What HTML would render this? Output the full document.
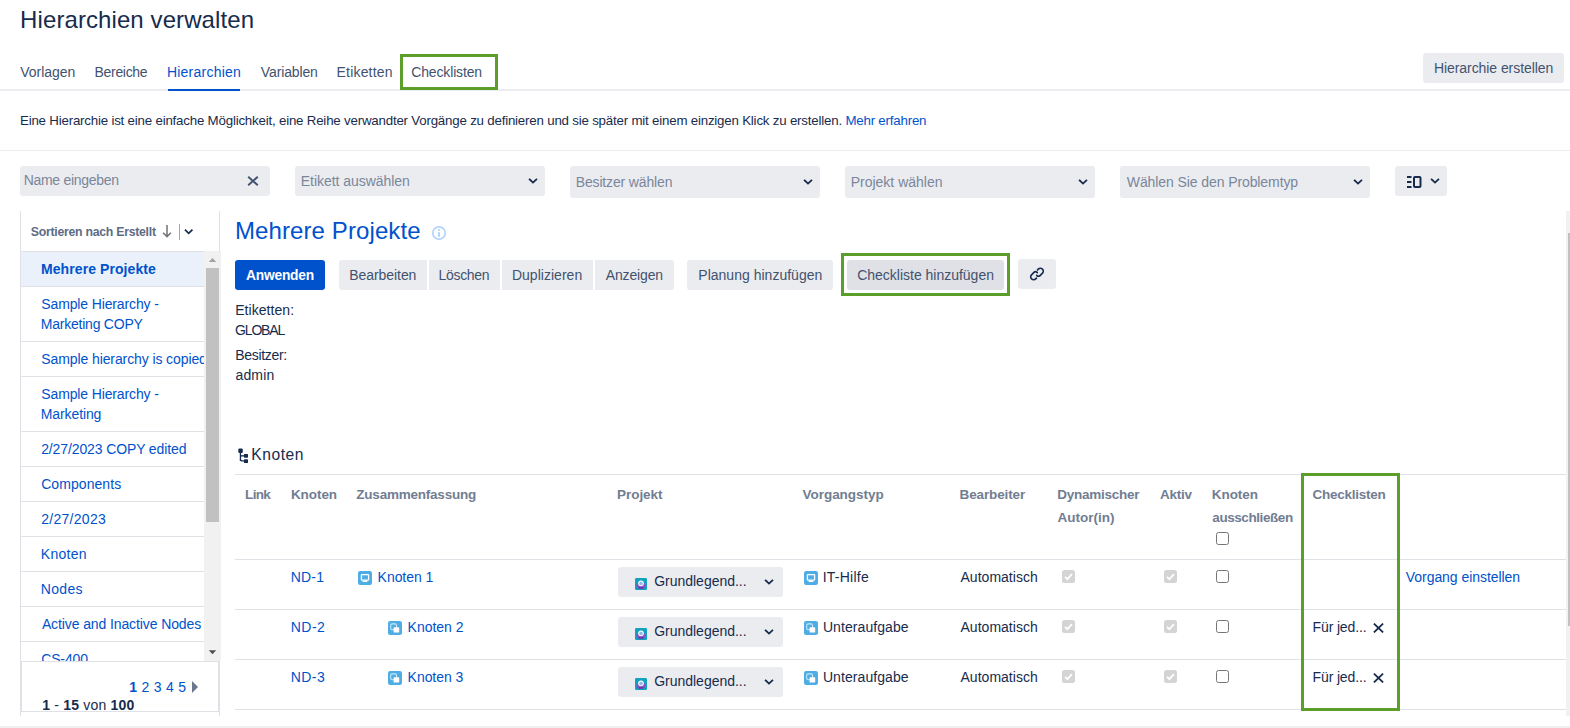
<!DOCTYPE html>
<html><head><meta charset="utf-8"><style>
html,body{margin:0;padding:0;}
body{width:1570px;height:728px;position:relative;overflow:hidden;background:#fff;font-family:"Liberation Sans",sans-serif;}
.t{position:absolute;white-space:nowrap;}
.b{position:absolute;}
b{font-weight:700}
</style></head><body>
<div class="t " style="left:20.1px;top:7.68px;font-size:24px;line-height:24px;color:#172B4D;letter-spacing:0.090px;">Hierarchien verwalten</div>
<div class="t " style="left:20.3px;top:65.15px;font-size:14px;line-height:14px;color:#42526E;letter-spacing:-0.029px;">Vorlagen</div>
<div class="t " style="left:94.60000000000001px;top:65.15px;font-size:14px;line-height:14px;color:#42526E;letter-spacing:-0.329px;">Bereiche</div>
<div class="t " style="left:166.9px;top:65.15px;font-size:14px;line-height:14px;color:#0052CC;letter-spacing:0.240px;">Hierarchien</div>
<div class="t " style="left:260.8px;top:65.15px;font-size:14px;line-height:14px;color:#42526E;letter-spacing:-0.125px;">Variablen</div>
<div class="t " style="left:336.59999999999997px;top:65.15px;font-size:14px;line-height:14px;color:#42526E;letter-spacing:0.175px;">Etiketten</div>
<div class="t " style="left:411.2px;top:65.15px;font-size:14px;line-height:14px;color:#42526E;letter-spacing:-0.140px;">Checklisten</div>
<div class="b" style="left:0px;top:89px;width:1570px;height:2px;background:#EBECF0"></div>
<div class="b" style="left:168px;top:89px;width:72px;height:2px;background:#0052CC"></div>
<div class="b" style="left:400px;top:54px;width:98px;height:36px;border:3px solid #5C9E2A;box-sizing:border-box"></div>
<div class="b" style="left:1423px;top:53px;width:141px;height:30px;background:#EBECF0;border-radius:3px"></div>
<div class="t " style="left:1433.9px;top:61.15px;font-size:14px;line-height:14px;color:#42526E;letter-spacing:-0.063px;">Hierarchie erstellen</div>
<div class="t " style="left:20.0px;top:113.74px;font-size:13.3px;line-height:13.3px;color:#172B4D;letter-spacing:-0.199px;">Eine Hierarchie ist eine einfache Möglichkeit, eine Reihe verwandter Vorgänge zu definieren und sie später mit einem einzigen Klick zu erstellen. <span style="color:#0052CC">Mehr erfahren</span></div>
<div class="b" style="left:0px;top:150px;width:1570px;height:1px;background:#EBECF0"></div>
<div class="b" style="left:20px;top:166px;width:250px;height:30px;background:#EBECF0;border-radius:3px"></div>
<div class="t " style="left:23.7px;top:173.15px;font-size:14px;line-height:14px;color:#7A869A;letter-spacing:-0.300px;">Name eingeben</div>
<svg class="b" style="left:247px;top:176px;" width="12" height="10" viewBox="0 0 12 10"><path d="M1.2 0.7 L10.8 9.3 M10.8 0.7 L1.2 9.3" stroke="#42526E" stroke-width="1.9"/></svg>
<div class="b" style="left:295px;top:166px;width:250px;height:30px;background:#EBECF0;border-radius:3px"></div>
<div class="t " style="left:300.79999999999995px;top:174.15px;font-size:14px;line-height:14px;color:#7A869A;letter-spacing:-0.044px;">Etikett auswählen</div>
<svg class="b" style="left:527.5px;top:177.5px;" width="10" height="7" viewBox="0 0 10 7"><path d="M1.7 1.5 L5 4.6 L8.3 1.5" fill="none" stroke="#172B4D" stroke-width="1.85" stroke-linecap="square"/></svg>
<div class="b" style="left:570px;top:166px;width:250px;height:32px;background:#EBECF0;border-radius:3px"></div>
<div class="t " style="left:575.6999999999999px;top:175.15px;font-size:14px;line-height:14px;color:#7A869A;letter-spacing:-0.143px;">Besitzer wählen</div>
<svg class="b" style="left:802.5px;top:179px;" width="10" height="7" viewBox="0 0 10 7"><path d="M1.7 1.5 L5 4.6 L8.3 1.5" fill="none" stroke="#172B4D" stroke-width="1.85" stroke-linecap="square"/></svg>
<div class="b" style="left:845px;top:166px;width:250px;height:32px;background:#EBECF0;border-radius:3px"></div>
<div class="t " style="left:850.6999999999999px;top:175.15px;font-size:14px;line-height:14px;color:#7A869A;letter-spacing:0.000px;">Projekt wählen</div>
<svg class="b" style="left:1077.5px;top:179px;" width="10" height="7" viewBox="0 0 10 7"><path d="M1.7 1.5 L5 4.6 L8.3 1.5" fill="none" stroke="#172B4D" stroke-width="1.85" stroke-linecap="square"/></svg>
<div class="b" style="left:1120px;top:166px;width:250px;height:32px;background:#EBECF0;border-radius:3px"></div>
<div class="t " style="left:1126.8px;top:175.15px;font-size:14px;line-height:14px;color:#7A869A;letter-spacing:-0.092px;">Wählen Sie den Problemtyp</div>
<svg class="b" style="left:1352.5px;top:179px;" width="10" height="7" viewBox="0 0 10 7"><path d="M1.7 1.5 L5 4.6 L8.3 1.5" fill="none" stroke="#172B4D" stroke-width="1.85" stroke-linecap="square"/></svg>
<div class="b" style="left:1395px;top:166px;width:52px;height:30px;background:#EBECF0;border-radius:3px"></div>
<svg class="b" style="left:1407px;top:176px;" width="15" height="12" viewBox="0 0 15 12"><g fill="#172B4D"><rect x="0" y="0" width="4.5" height="2"/><rect x="0" y="5" width="4.5" height="2"/><rect x="0" y="10" width="4.5" height="2"/></g><rect x="7" y="1" width="6.5" height="10" rx="1" fill="none" stroke="#172B4D" stroke-width="2"/></svg>
<svg class="b" style="left:1429.5px;top:178px;" width="10" height="7" viewBox="0 0 10 7"><path d="M1.7 1.5 L5 4.6 L8.3 1.5" fill="none" stroke="#172B4D" stroke-width="1.85" stroke-linecap="square"/></svg>
<div class="b" style="left:20px;top:211px;width:1px;height:505px;background:#DFE1E6"></div>
<div class="b" style="left:219px;top:211px;width:1px;height:505px;background:#DFE1E6"></div>
<div class="t " style="left:30.8px;top:225.59px;font-size:12.3px;line-height:12.3px;color:#5E6C84;font-weight:700;letter-spacing:-0.273px;">Sortieren nach Erstellt</div>
<svg class="b" style="left:162px;top:225px;" width="10" height="13" viewBox="0 0 10 13"><path d="M5 0.8 V11.6 M1.6 8.2 L5 11.6 L8.4 8.2" fill="none" stroke="#707478" stroke-width="1.5" stroke-linecap="square"/></svg>
<div class="b" style="left:179px;top:224px;width:1px;height:16px;background:#A5A5A5"></div>
<svg class="b" style="left:183.5px;top:229.2px;" width="10" height="6" viewBox="0 0 10 6"><path d="M1.6 1.3 L4.7 4.3 L7.8 1.3" fill="none" stroke="#172B4D" stroke-width="1.8" stroke-linecap="square"/></svg>
<div class="b" style="left:21px;top:251px;width:183px;height:410px;overflow:hidden">
<div class="b" style="left:0;top:0px;width:183px;height:35px;border-top:1px solid #DFE1E6;box-sizing:border-box;background:#EAF1FB;"></div>
<div class="t " style="left:20.0px;top:11.15px;font-size:14px;line-height:14px;color:#0052CC;font-weight:700;letter-spacing:0.080px;">Mehrere Projekte</div>
<div class="b" style="left:0;top:35px;width:183px;height:55px;border-top:1px solid #DFE1E6;box-sizing:border-box;"></div>
<div class="t " style="left:20.299999999999997px;top:46.15px;font-size:14px;line-height:14px;color:#0052CC;letter-spacing:-0.135px;">Sample Hierarchy -</div>
<div class="t " style="left:19.799999999999997px;top:66.15px;font-size:14px;line-height:14px;color:#0052CC;letter-spacing:-0.231px;">Marketing COPY</div>
<div class="b" style="left:0;top:90px;width:183px;height:35px;border-top:1px solid #DFE1E6;box-sizing:border-box;"></div>
<div class="t " style="left:20.299999999999997px;top:101.15px;font-size:14px;line-height:14px;color:#0052CC;letter-spacing:-0.100px;">Sample hierarchy is copied</div>
<div class="b" style="left:0;top:125px;width:183px;height:55px;border-top:1px solid #DFE1E6;box-sizing:border-box;"></div>
<div class="t " style="left:20.299999999999997px;top:136.15px;font-size:14px;line-height:14px;color:#0052CC;letter-spacing:-0.135px;">Sample Hierarchy -</div>
<div class="t " style="left:19.799999999999997px;top:156.15px;font-size:14px;line-height:14px;color:#0052CC;letter-spacing:-0.112px;">Marketing</div>
<div class="b" style="left:0;top:180px;width:183px;height:35px;border-top:1px solid #DFE1E6;box-sizing:border-box;"></div>
<div class="t " style="left:20.2px;top:191.15px;font-size:14px;line-height:14px;color:#0052CC;letter-spacing:-0.120px;">2/27/2023 COPY edited</div>
<div class="b" style="left:0;top:215px;width:183px;height:35px;border-top:1px solid #DFE1E6;box-sizing:border-box;"></div>
<div class="t " style="left:20.2px;top:226.15px;font-size:14px;line-height:14px;color:#0052CC;letter-spacing:0.067px;">Components</div>
<div class="b" style="left:0;top:250px;width:183px;height:35px;border-top:1px solid #DFE1E6;box-sizing:border-box;"></div>
<div class="t " style="left:20.2px;top:261.15px;font-size:14px;line-height:14px;color:#0052CC;letter-spacing:0.287px;">2/27/2023</div>
<div class="b" style="left:0;top:285px;width:183px;height:35px;border-top:1px solid #DFE1E6;box-sizing:border-box;"></div>
<div class="t " style="left:19.799999999999997px;top:296.15px;font-size:14px;line-height:14px;color:#0052CC;letter-spacing:0.280px;">Knoten</div>
<div class="b" style="left:0;top:320px;width:183px;height:35px;border-top:1px solid #DFE1E6;box-sizing:border-box;"></div>
<div class="t " style="left:19.799999999999997px;top:331.15px;font-size:14px;line-height:14px;color:#0052CC;letter-spacing:0.300px;">Nodes</div>
<div class="b" style="left:0;top:355px;width:183px;height:35px;border-top:1px solid #DFE1E6;box-sizing:border-box;"></div>
<div class="t " style="left:20.9px;top:366.15px;font-size:14px;line-height:14px;color:#0052CC;letter-spacing:-0.108px;">Active and Inactive Nodes</div>
<div class="b" style="left:0;top:390px;width:183px;height:35px;border-top:1px solid #DFE1E6;box-sizing:border-box;"></div>
<div class="t " style="left:20.2px;top:401.15px;font-size:14px;line-height:14px;color:#0052CC;letter-spacing:-0.139px;">CS-400</div>
</div>
<div class="b" style="left:204px;top:251px;width:17px;height:410px;background:#F1F1F1"></div>
<svg class="b" style="left:208px;top:257px;" width="9" height="6" viewBox="0 0 9 6"><path d="M0.8 5 L4.5 1 L8.2 5Z" fill="#A3A3A3"/></svg>
<div class="b" style="left:206px;top:268px;width:13px;height:254px;background:#C1C1C1"></div>
<svg class="b" style="left:208px;top:650px;" width="9" height="5" viewBox="0 0 9 5"><path d="M0.8 0.2 L4.5 4.2 L8.2 0.2Z" fill="#505050"/></svg>
<div class="b" style="left:21px;top:661px;width:198px;height:51px;border:1px solid #DFE1E6;box-sizing:border-box;background:#fff"></div>
<div class="t " style="left:129.2px;top:680.15px;font-size:14px;line-height:14px;color:#0052CC;letter-spacing:0.3px;"><b>1</b> 2 3 4 5</div>
<svg class="b" style="left:192px;top:681px;" width="6" height="12" viewBox="0 0 6 12"><path d="M0 0 L6 6 L0 12Z" fill="#6B778C"/></svg>
<div class="t " style="left:42.3px;top:698.15px;font-size:14px;line-height:14px;color:#172B4D;letter-spacing:0.18px;"><b>1</b> - <b>15</b> von <b>100</b></div>
<div class="t " style="left:234.9px;top:218.68px;font-size:24px;line-height:24px;color:#0052CC;letter-spacing:0.107px;">Mehrere Projekte</div>
<svg class="b" style="left:431px;top:225px;" width="16" height="16" viewBox="0 0 16 16"><circle cx="8" cy="8" r="6.2" fill="none" stroke="#B3D4FF" stroke-width="1.7"/><rect x="7" y="7.2" width="2" height="4.6" fill="#B3D4FF"/><rect x="7" y="4.1" width="2" height="1.7" fill="#B3D4FF"/></svg>
<div class="b" style="left:235px;top:260px;width:90px;height:30px;background:#0052CC;border-radius:3px"></div>
<div class="t " style="left:246.0px;top:268.92px;font-size:13.8px;line-height:13.8px;color:#fff;font-weight:700;letter-spacing:-0.229px;">Anwenden</div>
<div class="b" style="left:339px;top:260px;width:88px;height:30px;background:#EBECF0;border-radius:3px 0 0 3px"></div>
<div class="t " style="left:349.29999999999995px;top:268.15px;font-size:14px;line-height:14px;color:#42526E;letter-spacing:-0.067px;">Bearbeiten</div>
<div class="b" style="left:429px;top:260px;width:71px;height:30px;background:#EBECF0;border-radius:0"></div>
<div class="t " style="left:438.5px;top:268.15px;font-size:14px;line-height:14px;color:#42526E;letter-spacing:-0.300px;">Löschen</div>
<div class="b" style="left:502px;top:260px;width:91px;height:30px;background:#EBECF0;border-radius:0"></div>
<div class="t " style="left:511.9px;top:268.15px;font-size:14px;line-height:14px;color:#42526E;letter-spacing:0.030px;">Duplizieren</div>
<div class="b" style="left:595px;top:260px;width:79px;height:30px;background:#EBECF0;border-radius:0 3px 3px 0"></div>
<div class="t " style="left:605.8px;top:268.15px;font-size:14px;line-height:14px;color:#42526E;letter-spacing:-0.157px;">Anzeigen</div>
<div class="b" style="left:687px;top:260px;width:146px;height:30px;background:#EBECF0;border-radius:3px"></div>
<div class="t " style="left:698.3px;top:268.15px;font-size:14px;line-height:14px;color:#42526E;letter-spacing:0.012px;">Planung hinzufügen</div>
<div class="b" style="left:847px;top:260px;width:157px;height:30px;background:#DFE1E6;border-radius:3px"></div>
<div class="t " style="left:857.1999999999999px;top:268.15px;font-size:14px;line-height:14px;color:#42526E;letter-spacing:-0.010px;">Checkliste hinzufügen</div>
<div class="b" style="left:841px;top:253px;width:169px;height:43px;border:3px solid #5C9E2A;box-sizing:border-box"></div>
<div class="b" style="left:1018px;top:259px;width:38px;height:30px;background:#EBECF0;border-radius:3px"></div>
<svg class="b" style="left:1027px;top:263.6px" width="20" height="20" viewBox="0 0 24 24"><path fill="#172B4D" d="M12.856 5.457l-.937.92a1.002 1.002 0 000 1.437 1.047 1.047 0 001.463 0l.984-.966c.967-.95 2.542-.93 3.518.02a2.388 2.388 0 01.02 3.448l-2.932 2.878c-.651.64-1.697.64-2.349 0l-.28-.275a1.047 1.047 0 00-1.464 0 1.001 1.001 0 000 1.437l.282.275c1.451 1.426 3.777 1.426 5.228 0l2.871-2.820c1.750-1.718 1.681-4.580-.066-6.300-1.753-1.720-4.632-1.798-6.378-.074zm-1.712 13.086l.937-.92a1.002 1.002 0 000-1.437 1.047 1.047 0 00-1.463 0l-.984.966c-.967.95-2.542.93-3.518-.02a2.388 2.388 0 01-.02-3.448l2.932-2.878a1.7 1.7 0 012.349 0l.28.275a1.047 1.047 0 001.464 0 1.001 1.001 0 000-1.437l-.282-.275a3.756 3.756 0 00-5.228 0l-2.871 2.82c-1.750 1.718-1.681 4.58.066 6.3 1.753 1.72 4.632 1.798 6.378.074z"/></svg>
<div class="t " style="left:235.20000000000002px;top:303.15px;font-size:14px;line-height:14px;color:#172B4D;letter-spacing:0.056px;">Etiketten:</div>
<div class="t " style="left:235.10000000000002px;top:323.15px;font-size:14px;line-height:14px;color:#172B4D;letter-spacing:-1.180px;">GLOBAL</div>
<div class="t " style="left:235.20000000000002px;top:348.15px;font-size:14px;line-height:14px;color:#172B4D;letter-spacing:-0.312px;">Besitzer:</div>
<div class="t " style="left:235.5px;top:368.15px;font-size:14px;line-height:14px;color:#172B4D;letter-spacing:0.150px;">admin</div>
<svg class="b" style="left:238px;top:448px;" width="11" height="16" viewBox="0 0 11 16"><g fill="#172B4D"><rect x="0.3" y="0.6" width="4.5" height="4.4" rx="1.2"/><rect x="1.8" y="4" width="1.3" height="9"/><path d="M1.8 11.5 Q1.8 13.5 3.8 13.5 H6.5 V12.3 H3.8 Q3.1 12.3 3.1 11.5Z"/><rect x="2.5" y="7.2" width="4" height="1.3"/><rect x="6" y="6" width="4" height="3.7" rx="0.6"/><rect x="6" y="11.3" width="4" height="3.8" rx="0.6"/></g></svg>
<div class="t " style="left:251.20000000000002px;top:446.79px;font-size:15.6px;line-height:15.6px;color:#172B4D;letter-spacing:0.580px;">Knoten</div>
<div class="b" style="left:235px;top:474px;width:1331px;height:1px;background:#DFE1E6"></div>
<div class="b" style="left:235px;top:559px;width:1331px;height:1px;background:#DFE1E6"></div>
<div class="b" style="left:235px;top:609px;width:1331px;height:1px;background:#DFE1E6"></div>
<div class="b" style="left:235px;top:659px;width:1331px;height:1px;background:#DFE1E6"></div>
<div class="b" style="left:235px;top:709px;width:1331px;height:1px;background:#DFE1E6"></div>
<div class="t " style="left:245.1px;top:487.57px;font-size:13.5px;line-height:13.5px;color:#717D92;font-weight:700;letter-spacing:-0.667px;">Link</div>
<div class="t " style="left:290.90000000000003px;top:487.57px;font-size:13.5px;line-height:13.5px;color:#717D92;font-weight:700;letter-spacing:-0.060px;">Knoten</div>
<div class="t " style="left:356.3px;top:487.57px;font-size:13.5px;line-height:13.5px;color:#717D92;font-weight:700;letter-spacing:-0.221px;">Zusammenfassung</div>
<div class="t " style="left:617.0px;top:487.57px;font-size:13.5px;line-height:13.5px;color:#717D92;font-weight:700;letter-spacing:-0.033px;">Projekt</div>
<div class="t " style="left:802.5px;top:487.57px;font-size:13.5px;line-height:13.5px;color:#717D92;font-weight:700;letter-spacing:-0.030px;">Vorgangstyp</div>
<div class="t " style="left:959.6px;top:487.57px;font-size:13.5px;line-height:13.5px;color:#717D92;font-weight:700;letter-spacing:-0.133px;">Bearbeiter</div>
<div class="t " style="left:1057.3px;top:487.57px;font-size:13.5px;line-height:13.5px;color:#717D92;font-weight:700;letter-spacing:-0.270px;">Dynamischer</div>
<div class="t " style="left:1160.0px;top:487.57px;font-size:13.5px;line-height:13.5px;color:#717D92;font-weight:700;letter-spacing:-0.250px;">Aktiv</div>
<div class="t " style="left:1211.6999999999998px;top:487.57px;font-size:13.5px;line-height:13.5px;color:#717D92;font-weight:700;letter-spacing:-0.020px;">Knoten</div>
<div class="t " style="left:1312.5px;top:487.57px;font-size:13.5px;line-height:13.5px;color:#717D92;font-weight:700;letter-spacing:-0.260px;">Checklisten</div>
<div class="t " style="left:1057.6000000000001px;top:510.57px;font-size:13.5px;line-height:13.5px;color:#717D92;font-weight:700;letter-spacing:0.000px;">Autor(in)</div>
<div class="t " style="left:1212.3px;top:510.57px;font-size:13.5px;line-height:13.5px;color:#717D92;font-weight:700;letter-spacing:-0.427px;">ausschließen</div>
<div class="b" style="left:1216px;top:532px;width:13px;height:13px;border:1px solid #767676;border-radius:2.5px;box-sizing:border-box;background:#fff"></div>
<div class="t " style="left:290.79999999999995px;top:570.15px;font-size:14px;line-height:14px;color:#0052CC;letter-spacing:0.167px;">ND-1</div>
<svg class="b" style="left:358px;top:571px;" width="14" height="14" viewBox="0 0 14 14"><rect width="14" height="14" rx="2.2" fill="#4FADE6"/><rect x="3.4" y="3.6" width="7.2" height="5.6" rx="0.8" fill="none" stroke="#fff" stroke-width="1.3"/><path d="M5.2 9.4 H8.8 L9.6 11 H4.4Z" fill="#fff"/></svg>
<div class="t " style="left:377.59999999999997px;top:570.15px;font-size:14px;line-height:14px;color:#0052CC;letter-spacing:-0.043px;">Knoten 1</div>
<div class="b" style="left:618px;top:567px;width:165px;height:30px;background:#EBECF0;border-radius:3px"></div>
<svg class="b" style="left:635px;top:578px;" width="12" height="12" viewBox="0 0 12 12"><rect width="12" height="12" rx="1.2" fill="#11A3BE"/><ellipse cx="6" cy="7.6" rx="4.6" ry="3.1" fill="#8A4FC9"/><rect x="3.5" y="9" width="5" height="1.8" fill="#6E38B0"/><circle cx="6" cy="5.3" r="2.9" fill="#F4F8FF"/><circle cx="6" cy="5.5" r="1.8" fill="#8DB8F0"/></svg>
<div class="t " style="left:654.1999999999999px;top:574.15px;font-size:14px;line-height:14px;color:#172B4D;letter-spacing:-0.015px;">Grundlegend...</div>
<svg class="b" style="left:763.5px;top:579px;" width="10" height="7" viewBox="0 0 10 7"><path d="M1.7 1.5 L5 4.6 L8.3 1.5" fill="none" stroke="#172B4D" stroke-width="1.85" stroke-linecap="square"/></svg>
<svg class="b" style="left:804px;top:571px;" width="14" height="14" viewBox="0 0 14 14"><rect width="14" height="14" rx="2.2" fill="#4FADE6"/><rect x="3.4" y="3.6" width="7.2" height="5.6" rx="0.8" fill="none" stroke="#fff" stroke-width="1.3"/><path d="M5.2 9.4 H8.8 L9.6 11 H4.4Z" fill="#fff"/></svg>
<div class="t " style="left:822.6999999999999px;top:570.15px;font-size:14px;line-height:14px;color:#172B4D;letter-spacing:0.243px;">IT-Hilfe</div>
<div class="t " style="left:960.5px;top:570.15px;font-size:14px;line-height:14px;color:#172B4D;letter-spacing:0.020px;">Automatisch</div>
<svg class="b" style="left:1062px;top:570px;" width="13" height="13" viewBox="0 0 13 13"><rect x="0" y="0" width="13" height="13" rx="2.5" fill="#D4D4D4"/><path d="M3 6.8 L5.4 9.2 L10 4.2" fill="none" stroke="#fff" stroke-width="1.8"/></svg>
<svg class="b" style="left:1164px;top:570px;" width="13" height="13" viewBox="0 0 13 13"><rect x="0" y="0" width="13" height="13" rx="2.5" fill="#D4D4D4"/><path d="M3 6.8 L5.4 9.2 L10 4.2" fill="none" stroke="#fff" stroke-width="1.8"/></svg>
<div class="b" style="left:1216px;top:570px;width:13px;height:13px;border:1px solid #767676;border-radius:2.5px;box-sizing:border-box;background:#fff"></div>
<div class="t " style="left:1405.8px;top:570.15px;font-size:14px;line-height:14px;color:#0052CC;letter-spacing:-0.053px;">Vorgang einstellen</div>
<div class="t " style="left:290.79999999999995px;top:620.15px;font-size:14px;line-height:14px;color:#0052CC;letter-spacing:0.433px;">ND-2</div>
<svg class="b" style="left:388px;top:621px;" width="14" height="14" viewBox="0 0 14 14"><rect width="14" height="14" rx="2.2" fill="#4FADE6"/><rect x="2.7" y="2.9" width="5.8" height="5.8" rx="1.4" fill="none" stroke="#C9E6F8" stroke-width="1.1"/><rect x="5.6" y="6.2" width="5.6" height="5.4" rx="0.9" fill="#fff"/></svg>
<div class="t " style="left:407.59999999999997px;top:620.15px;font-size:14px;line-height:14px;color:#0052CC;letter-spacing:-0.029px;">Knoten 2</div>
<div class="b" style="left:618px;top:617px;width:165px;height:30px;background:#EBECF0;border-radius:3px"></div>
<svg class="b" style="left:635px;top:628px;" width="12" height="12" viewBox="0 0 12 12"><rect width="12" height="12" rx="1.2" fill="#11A3BE"/><ellipse cx="6" cy="7.6" rx="4.6" ry="3.1" fill="#8A4FC9"/><rect x="3.5" y="9" width="5" height="1.8" fill="#6E38B0"/><circle cx="6" cy="5.3" r="2.9" fill="#F4F8FF"/><circle cx="6" cy="5.5" r="1.8" fill="#8DB8F0"/></svg>
<div class="t " style="left:654.1999999999999px;top:624.15px;font-size:14px;line-height:14px;color:#172B4D;letter-spacing:-0.015px;">Grundlegend...</div>
<svg class="b" style="left:763.5px;top:629px;" width="10" height="7" viewBox="0 0 10 7"><path d="M1.7 1.5 L5 4.6 L8.3 1.5" fill="none" stroke="#172B4D" stroke-width="1.85" stroke-linecap="square"/></svg>
<svg class="b" style="left:804px;top:621px;" width="14" height="14" viewBox="0 0 14 14"><rect width="14" height="14" rx="2.2" fill="#4FADE6"/><rect x="2.7" y="2.9" width="5.8" height="5.8" rx="1.4" fill="none" stroke="#C9E6F8" stroke-width="1.1"/><rect x="5.6" y="6.2" width="5.6" height="5.4" rx="0.9" fill="#fff"/></svg>
<div class="t " style="left:822.9px;top:620.15px;font-size:14px;line-height:14px;color:#172B4D;letter-spacing:0.082px;">Unteraufgabe</div>
<div class="t " style="left:960.5px;top:620.15px;font-size:14px;line-height:14px;color:#172B4D;letter-spacing:0.020px;">Automatisch</div>
<svg class="b" style="left:1062px;top:620px;" width="13" height="13" viewBox="0 0 13 13"><rect x="0" y="0" width="13" height="13" rx="2.5" fill="#D4D4D4"/><path d="M3 6.8 L5.4 9.2 L10 4.2" fill="none" stroke="#fff" stroke-width="1.8"/></svg>
<svg class="b" style="left:1164px;top:620px;" width="13" height="13" viewBox="0 0 13 13"><rect x="0" y="0" width="13" height="13" rx="2.5" fill="#D4D4D4"/><path d="M3 6.8 L5.4 9.2 L10 4.2" fill="none" stroke="#fff" stroke-width="1.8"/></svg>
<div class="b" style="left:1216px;top:620px;width:13px;height:13px;border:1px solid #767676;border-radius:2.5px;box-sizing:border-box;background:#fff"></div>
<div class="t " style="left:1312.6000000000001px;top:620.15px;font-size:14px;line-height:14px;color:#172B4D;letter-spacing:-0.144px;">Für jed...</div>
<svg class="b" style="left:1373px;top:623px;" width="11" height="10" viewBox="0 0 11 10"><path d="M0.9 0.6 L10.1 9.4 M10.1 0.6 L0.9 9.4" stroke="#172B4D" stroke-width="1.8"/></svg>
<div class="t " style="left:290.79999999999995px;top:670.15px;font-size:14px;line-height:14px;color:#0052CC;letter-spacing:0.400px;">ND-3</div>
<svg class="b" style="left:388px;top:671px;" width="14" height="14" viewBox="0 0 14 14"><rect width="14" height="14" rx="2.2" fill="#4FADE6"/><rect x="2.7" y="2.9" width="5.8" height="5.8" rx="1.4" fill="none" stroke="#C9E6F8" stroke-width="1.1"/><rect x="5.6" y="6.2" width="5.6" height="5.4" rx="0.9" fill="#fff"/></svg>
<div class="t " style="left:407.59999999999997px;top:670.15px;font-size:14px;line-height:14px;color:#0052CC;letter-spacing:-0.043px;">Knoten 3</div>
<div class="b" style="left:618px;top:667px;width:165px;height:30px;background:#EBECF0;border-radius:3px"></div>
<svg class="b" style="left:635px;top:678px;" width="12" height="12" viewBox="0 0 12 12"><rect width="12" height="12" rx="1.2" fill="#11A3BE"/><ellipse cx="6" cy="7.6" rx="4.6" ry="3.1" fill="#8A4FC9"/><rect x="3.5" y="9" width="5" height="1.8" fill="#6E38B0"/><circle cx="6" cy="5.3" r="2.9" fill="#F4F8FF"/><circle cx="6" cy="5.5" r="1.8" fill="#8DB8F0"/></svg>
<div class="t " style="left:654.1999999999999px;top:674.15px;font-size:14px;line-height:14px;color:#172B4D;letter-spacing:-0.015px;">Grundlegend...</div>
<svg class="b" style="left:763.5px;top:679px;" width="10" height="7" viewBox="0 0 10 7"><path d="M1.7 1.5 L5 4.6 L8.3 1.5" fill="none" stroke="#172B4D" stroke-width="1.85" stroke-linecap="square"/></svg>
<svg class="b" style="left:804px;top:671px;" width="14" height="14" viewBox="0 0 14 14"><rect width="14" height="14" rx="2.2" fill="#4FADE6"/><rect x="2.7" y="2.9" width="5.8" height="5.8" rx="1.4" fill="none" stroke="#C9E6F8" stroke-width="1.1"/><rect x="5.6" y="6.2" width="5.6" height="5.4" rx="0.9" fill="#fff"/></svg>
<div class="t " style="left:822.9px;top:670.15px;font-size:14px;line-height:14px;color:#172B4D;letter-spacing:0.082px;">Unteraufgabe</div>
<div class="t " style="left:960.5px;top:670.15px;font-size:14px;line-height:14px;color:#172B4D;letter-spacing:0.020px;">Automatisch</div>
<svg class="b" style="left:1062px;top:670px;" width="13" height="13" viewBox="0 0 13 13"><rect x="0" y="0" width="13" height="13" rx="2.5" fill="#D4D4D4"/><path d="M3 6.8 L5.4 9.2 L10 4.2" fill="none" stroke="#fff" stroke-width="1.8"/></svg>
<svg class="b" style="left:1164px;top:670px;" width="13" height="13" viewBox="0 0 13 13"><rect x="0" y="0" width="13" height="13" rx="2.5" fill="#D4D4D4"/><path d="M3 6.8 L5.4 9.2 L10 4.2" fill="none" stroke="#fff" stroke-width="1.8"/></svg>
<div class="b" style="left:1216px;top:670px;width:13px;height:13px;border:1px solid #767676;border-radius:2.5px;box-sizing:border-box;background:#fff"></div>
<div class="t " style="left:1312.6000000000001px;top:670.15px;font-size:14px;line-height:14px;color:#172B4D;letter-spacing:-0.144px;">Für jed...</div>
<svg class="b" style="left:1373px;top:673px;" width="11" height="10" viewBox="0 0 11 10"><path d="M0.9 0.6 L10.1 9.4 M10.1 0.6 L0.9 9.4" stroke="#172B4D" stroke-width="1.8"/></svg>
<div class="b" style="left:1301px;top:473px;width:99px;height:238px;border:3px solid #5C9E2A;box-sizing:border-box"></div>
<div class="b" style="left:1566px;top:211px;width:4px;height:505px;background:#F1F1F1"></div>
<div class="b" style="left:1568px;top:233px;width:2px;height:393px;background:#C1C1C1"></div>
<div class="b" style="left:0px;top:726px;width:1570px;height:2px;background:#EFEFEF"></div>
</body></html>
